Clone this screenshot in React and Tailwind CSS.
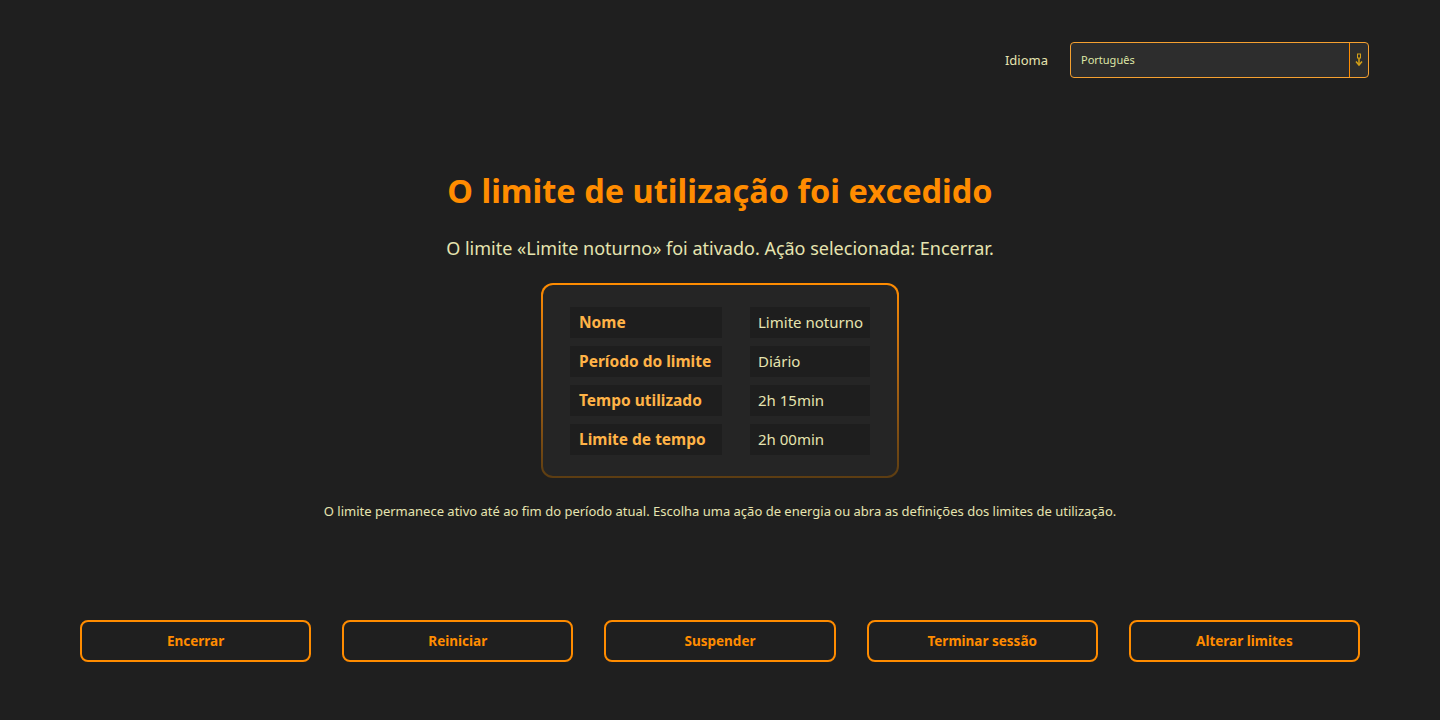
import React, { useState } from 'react';

const details = [
  { label: 'Nome', value: 'Limite noturno' },
  { label: 'Período do limite', value: 'Diário' },
  { label: 'Tempo utilizado', value: '2h 15min' },
  { label: 'Limite de tempo', value: '2h 00min' },
];

const actions = ['Encerrar', 'Reiniciar', 'Suspender', 'Terminar sessão', 'Alterar limites'];

const SelectArrow = () => (
  <svg width="8" height="14" viewBox="0 0 8 14" fill="none">
    <rect x="2.5" y="1" width="3" height="4" stroke="#d4a017" strokeWidth="1" />
    <path d="M4 5v6" stroke="#d4a017" strokeWidth="1.5" />
    <path d="M1 8.5 4 12l3-3.5" stroke="#d4a017" strokeWidth="1.5" />
  </svg>
);

const App = () => {
  const [language, setLanguage] = useState('Português');

  return (
    <div
      className="h-[720px] w-full bg-[#1f1f1f] flex flex-col"
      style={{ fontFamily: '"Noto Sans", "Open Sans", sans-serif' }}
    >
      {/* Header */}
      <div className="flex justify-end items-center pt-[42px] pr-[71px] gap-[22px]">
        <span className="text-[13px] pt-[1px] text-[#e6e4b0]">Idioma</span>
        <div className="w-[299px] h-[36px] flex bg-[#2d2d2d] border border-[#f5a030] rounded-[4px]">
          <div className="flex-1 flex items-center pl-[10px] text-[11px] text-[#dfe6a6]">{language}</div>
          <button
            className="w-[19px] flex items-center justify-center border-l border-[#ff8c00]"
            onClick={() => setLanguage(language)}
          >
            <SelectArrow />
          </button>
        </div>
      </div>

      {/* Content */}
      <div className="flex flex-col items-center">
        <h1 className="mt-[93px] text-[32.5px] leading-[40px] font-bold text-[#ff8c00]">
          O limite de utilização foi excedido
        </h1>
        <p className="mt-[25px] text-[18px] leading-[24px] text-[#e6e4b0]">
          O limite «Limite noturno» foi ativado. Ação selecionada: Encerrar.
        </p>

        <div className="mt-[23px] p-[2px] rounded-[12px] bg-gradient-to-b from-[#ff8c00] to-[#5c3d12]">
          <div className="rounded-[10px] bg-[#252525] px-[27px] pt-[22px] pb-[21px]">
            <div className="grid grid-cols-[152px_120px] gap-x-[28px] gap-y-[8px]">
              {details.map((row) => (
                <React.Fragment key={row.label}>
                  <div className="h-[31px] flex items-center pl-[9px] bg-[#1e1e1e] text-[15.5px] font-bold text-[#ffb347]">
                    {row.label}
                  </div>
                  <div className="h-[31px] flex items-center pl-[8px] bg-[#1e1e1e] text-[15px] text-[#e6e4b0]">
                    {row.value}
                  </div>
                </React.Fragment>
              ))}
            </div>
          </div>
        </div>

        <p className="mt-[24px] text-[13px] leading-[18px] text-[#e6e4b0]">
          O limite permanece ativo até ao fim do período atual. Escolha uma ação de energia ou abra as definições dos limites de utilização.
        </p>
      </div>

      {/* Actions */}
      <div className="mt-auto mb-[58px] px-[80px] grid grid-cols-5 gap-[31px]">
        {actions.map((action) => (
          <button
            key={action}
            className="h-[42px] rounded-[8px] border-2 border-[#ff8c00] bg-transparent text-[13.5px] font-bold text-[#ff8c00]"
          >
            {action}
          </button>
        ))}
      </div>
    </div>
  );
};

export default App;
